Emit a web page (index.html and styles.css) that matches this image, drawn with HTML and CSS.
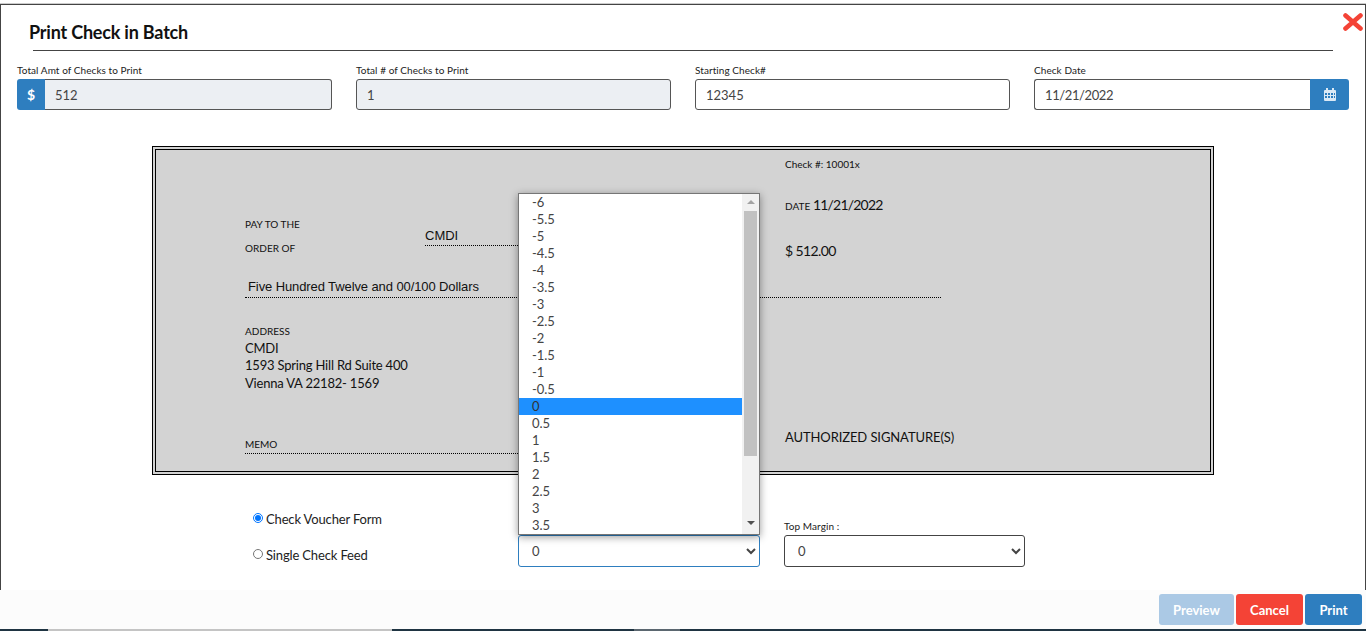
FILE: index.html
```html
<!DOCTYPE html>
<html lang="en">
<head>
    <meta charset="UTF-8">
    <meta name="viewport" content="width=device-width, initial-scale=1.0">
    <title>Print Check in Batch</title>
    <link rel="stylesheet" href="styles.css">
</head>
<body>

<div class="page">
    <div class="modal">
        <!-- Close icon -->
        <svg class="close-icon" width="20" height="18" viewBox="0 0 20 18">
            <path d="M2.5 2.5 L17.5 15.5 M17.5 2.5 L2.5 15.5" stroke="#f44336" stroke-width="4.6" stroke-linecap="round"/>
        </svg>

        <div class="modal-title">Print Check in Batch</div>

        <!-- Top fields -->
        <div class="fields">
            <div class="field">
                <label class="small-label">Total Amt of Checks to Print</label>
                <div class="input-group">
                    <span class="addon addon-left">$</span>
                    <input class="text-input joined-left" type="text" value="512" disabled>
                </div>
            </div>
            <div class="field">
                <label class="small-label">Total # of Checks to Print</label>
                <input class="text-input" type="text" value="1" disabled>
            </div>
            <div class="field">
                <label class="small-label">Starting Check#</label>
                <input class="text-input" type="text" value="12345">
            </div>
            <div class="field">
                <label class="small-label">Check Date</label>
                <div class="input-group">
                    <input class="text-input joined-right date-input" type="text" value="11/21/2022">
                    <span class="addon addon-right">
                        <svg width="12" height="13" viewBox="0 0 12 13">
                            <path fill="#dbe9f5" fill-rule="evenodd" d="M2 0h2v2h4V0h2v2h1a1 1 0 0 1 1 1v9a1 1 0 0 1-1 1H1a1 1 0 0 1-1-1V3a1 1 0 0 1 1-1h1z M1 5v2h2V5z M4 5v2h2V5z M7 5v2h2V5z M10 5v2h1V5z M1 8v2h2V8z M4 8v2h2V8z M7 8v2h2V8z M10 8v2h1V8z"/>
                        </svg>
                    </span>
                </div>
            </div>
        </div>

        <!-- Check preview -->
        <div class="check">
            <div class="check-number">Check #: 10001x</div>
            <div class="check-date"><span class="tiny">DATE</span> 11/21/2022</div>

            <div class="pay-to">
                <div>PAY TO THE</div>
                <div>ORDER OF</div>
            </div>
            <div class="payee">CMDI</div>
            <div class="amount">$ 512.00</div>

            <div class="words">Five Hundred Twelve and 00/100 Dollars</div>

            <div class="address">
                <div class="tiny">ADDRESS</div>
                <div>CMDI</div>
                <div>1593 Spring Hill Rd Suite 400</div>
                <div>Vienna VA 22182- 1569</div>
            </div>

            <div class="memo">MEMO</div>
            <div class="signature">AUTHORIZED SIGNATURE(S)</div>
        </div>

        <!-- Form type and margins -->
        <div class="options">
            <div class="radios">
                <label class="radio-row"><input type="radio" name="formType" checked> Check Voucher Form</label>
                <label class="radio-row"><input type="radio" name="formType"> Single Check Feed</label>
            </div>

            <div class="select-box">
                <select class="margin-select focused">
                    <option>0</option>
                </select>

                <!-- Open dropdown list -->
                <div class="dropdown">
                    <div class="dropdown-items">
                        <div>-6</div>
                        <div>-5.5</div>
                        <div>-5</div>
                        <div>-4.5</div>
                        <div>-4</div>
                        <div>-3.5</div>
                        <div>-3</div>
                        <div>-2.5</div>
                        <div>-2</div>
                        <div>-1.5</div>
                        <div>-1</div>
                        <div>-0.5</div>
                        <div class="selected">0</div>
                        <div>0.5</div>
                        <div>1</div>
                        <div>1.5</div>
                        <div>2</div>
                        <div>2.5</div>
                        <div>3</div>
                        <div>3.5</div>
                    </div>
                    <div class="scrollbar">
                        <div class="arrow-up"></div>
                        <div class="thumb"></div>
                        <div class="arrow-down"></div>
                    </div>
                </div>
            </div>

            <div class="select-box select-box-narrow">
                <label class="small-label select-label">Top Margin :</label>
                <select class="margin-select">
                    <option>0</option>
                </select>
            </div>
        </div>
    </div>

    <!-- Buttons -->
    <div class="footer">
        <button class="btn btn-preview">Preview</button>
        <button class="btn btn-cancel">Cancel</button>
        <button class="btn btn-print">Print</button>
    </div>

    <!-- Page behind the modal -->
    <div class="bottom-strip">
        <div class="strip-light"></div>
        <div class="strip-gray"></div>
    </div>
</div>

</body>
</html>
```

FILE: styles.css
```css
* {
    box-sizing: border-box;
}

body {
    margin: 0;
    padding: 0;
    background: #fff;
    overflow: hidden;
    font-family: Lato, Arial, sans-serif;
    color: #111;
}

.page {
    display: flex;
    flex-direction: column;
    height: 631px;
    padding-top: 4px;
}

/* Modal */
.modal {
    position: relative;
    flex: 1;
    min-height: 0;
    border: 1px solid #444;
    border-bottom: none;
    box-shadow: 0 -1px 0 #ccc;
}

.close-icon {
    position: absolute;
    top: 8px;
    right: 2px;
}

.modal-title {
    height: 46px;
    margin: 0 32px;
    padding-top: 15px;
    border-bottom: 1px solid #444;
    font-size: 18px;
    line-height: 25px;
    font-weight: 700;
    letter-spacing: -0.2px;
    text-indent: -4px;
    color: #111;
}

/* Top fields */
.fields {
    display: grid;
    grid-template-columns: repeat(4, 315px);
    column-gap: 24px;
    margin: 14px 0 0 16px;
}

.small-label {
    display: block;
    height: 14px;
    font-size: 10px;
    line-height: 11px;
    letter-spacing: 0.07px;
    color: #222;
}

.input-group {
    display: flex;
}

.text-input {
    width: 100%;
    height: 31px;
    padding: 0 10px;
    border: 1px solid #555;
    border-radius: 3px;
    background: #fff;
    font-family: Lato, Arial, sans-serif;
    font-size: 13px;
    color: #444;
}

.text-input:disabled {
    background: #eceff3;
    color: #444;
}

.date-input {
    letter-spacing: -0.4px;
}

.joined-left {
    border-left: none;
    border-radius: 0 3px 3px 0;
}

.joined-right {
    border-right: none;
    border-radius: 3px 0 0 3px;
}

.addon {
    display: flex;
    flex: none;
    align-items: center;
    justify-content: center;
    height: 31px;
    background: #2e7ebf;
    color: #fff;
    font-size: 14px;
    font-weight: 700;
}

.addon-left {
    width: 28px;
    border-radius: 3px 0 0 3px;
}

.addon-right {
    width: 39px;
    border-radius: 0 3px 3px 0;
}

/* Check preview */
.check {
    display: grid;
    grid-template-columns: 180px 360px 1fr;
    grid-template-rows: 40px 25px 47px 36px 94px 62px;
    width: 1062px;
    height: 329px;
    margin: 36px auto 0;
    padding-left: 89px;
    border: 4px double #000;
    background: #d3d3d3;
    color: #111;
}

.tiny {
    font-size: 10px;
    letter-spacing: 0;
}

.check-number {
    grid-column: 3;
    grid-row: 1;
    padding-top: 7px;
    font-size: 10px;
    line-height: 14px;
}

.check-date {
    grid-column: 3;
    grid-row: 2;
    padding-top: 5px;
    font-size: 14px;
    line-height: 20px;
    letter-spacing: -0.8px;
}

.pay-to {
    grid-column: 1;
    grid-row: 3;
    display: flex;
    flex-direction: column;
    gap: 6px;
    font-size: 10px;
    line-height: 18px;
}

.payee {
    grid-column: 2;
    grid-row: 3;
    align-self: start;
    width: 335px;
    height: 31px;
    padding-top: 12px;
    border-bottom: 1px dotted #000;
    font-family: "Liberation Sans", Arial, sans-serif;
    font-size: 13px;
    line-height: 17px;
}

.amount {
    grid-column: 3;
    grid-row: 3;
    padding-top: 26px;
    font-size: 14px;
    line-height: 20px;
    letter-spacing: -0.6px;
}

.words {
    grid-column: 1 / 4;
    grid-row: 4;
    width: 696px;
    padding: 16px 0 0 3px;
    border-bottom: 1px dotted #000;
    font-family: "Liberation Sans", Arial, sans-serif;
    font-size: 13px;
    line-height: 18px;
    letter-spacing: -0.1px;
}

.address {
    grid-column: 1 / 3;
    grid-row: 5;
    padding-top: 25px;
    font-size: 13px;
    line-height: 17.5px;
    letter-spacing: -0.2px;
}

.address .tiny {
    line-height: 16.5px;
}

.memo {
    grid-column: 1 / 3;
    grid-row: 6;
    align-self: end;
    width: 515px;
    border-bottom: 1px dotted #000;
    font-size: 10px;
    line-height: 17px;
}

.signature {
    grid-column: 3;
    grid-row: 6;
    align-self: end;
    margin-bottom: 8px;
    font-size: 13px;
    line-height: 18px;
    letter-spacing: -0.1px;
}

/* Form type and margins */
.options {
    display: flex;
    align-items: flex-start;
    margin: 34px 0 0 252px;
}

.radios {
    display: flex;
    flex-direction: column;
    gap: 18px;
    width: 265px;
    padding-top: 1px;
}

.radio-row {
    display: flex;
    align-items: center;
    gap: 3px;
    font-size: 13px;
    line-height: 18px;
    letter-spacing: -0.15px;
    color: #222;
}

.radio-row input {
    width: 10px;
    height: 10px;
    margin: 0 0 2px;
}

.select-box {
    position: relative;
    width: 242px;
    margin-right: 24px;
    padding-top: 26px;
}

.select-box-narrow {
    width: 241px;
}

.select-label {
    position: absolute;
    top: 12px;
    left: 0;
}

.margin-select {
    width: 100%;
    height: 32px;
    padding: 0 9px;
    border: 1px solid #444;
    border-radius: 3px;
    background: #fff;
    font-family: Lato, Arial, sans-serif;
    font-size: 13px;
    color: #444;
}

.margin-select.focused {
    border-color: #2e7ebf;
}

/* Open dropdown */
.dropdown {
    position: absolute;
    left: 0;
    bottom: 32px;
    display: flex;
    width: 242px;
    height: 342px;
    border: 1px solid #767676;
    background: #fff;
    box-shadow: 0 2px 8px rgba(0, 0, 0, 0.4);
}

.dropdown-items {
    flex: 1;
    font-size: 13px;
    line-height: 17px;
    letter-spacing: -0.1px;
    color: #444;
}

.dropdown-items div {
    height: 17px;
    padding-left: 13px;
}

.dropdown-items .selected {
    background: #1e90ff;
    color: #333;
}

.scrollbar {
    display: flex;
    flex: none;
    flex-direction: column;
    align-items: center;
    width: 17px;
    background: #f1f1f1;
}

.arrow-up {
    margin-top: 6px;
    border-left: 4px solid transparent;
    border-right: 4px solid transparent;
    border-bottom: 4px solid #a3a3a3;
}

.thumb {
    width: 13px;
    height: 245px;
    margin-top: 7px;
    background: #c1c1c1;
}

.arrow-down {
    margin-top: 65px;
    border-left: 4px solid transparent;
    border-right: 4px solid transparent;
    border-top: 4px solid #505050;
}

/* Footer buttons */
.footer {
    display: flex;
    flex: none;
    justify-content: flex-end;
    gap: 2px;
    height: 39px;
    padding: 4px 4px 0 0;
    background: #fcfcfc;
}

.btn {
    height: 31px;
    padding: 0;
    border: none;
    border-radius: 3px;
    color: #fff;
    font-family: Lato, Arial, sans-serif;
    font-size: 13px;
    font-weight: 700;
}

.btn-preview {
    width: 75px;
    background: #abc9e5;
}

.btn-cancel {
    width: 67px;
    background: #f44336;
}

.btn-print {
    width: 57px;
    background: #2e7ebf;
}

/* Page behind the modal */
.bottom-strip {
    display: flex;
    flex: none;
    height: 2px;
    background: #1f3442;
}

.strip-light {
    width: 344px;
    margin-left: 48px;
    background: #c4c4c4;
}

.strip-gray {
    width: 46px;
    margin-left: 242px;
    background: #5b6770;
}
```
